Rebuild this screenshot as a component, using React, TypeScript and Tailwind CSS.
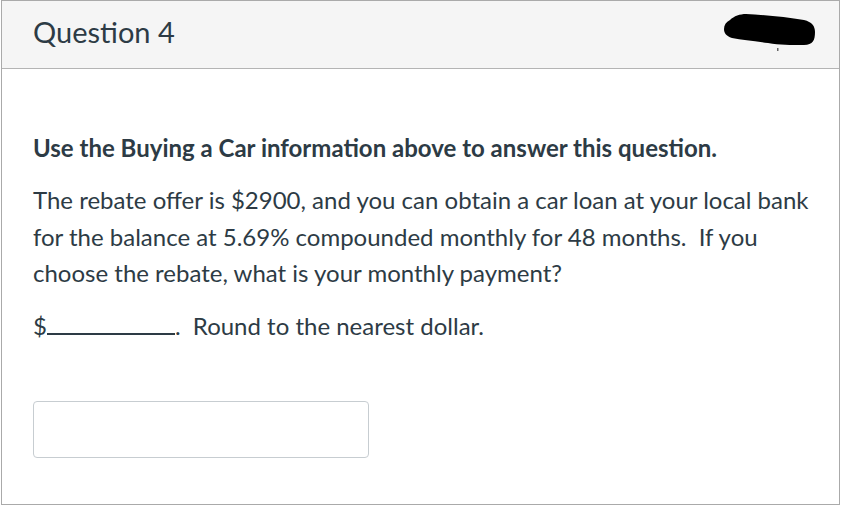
export default function App() {
  return (
    <div className="bg-white w-[847px] h-[511px]" style={{ fontFamily: "Lato, 'Liberation Sans', sans-serif" }}>
      <div className="ml-px w-[839px] h-[505px] border border-[#aaaaaa] text-[#2d3b45]">
        <div className="flex h-[68px] items-center justify-between border-b border-[#b4b4b4] bg-[#f5f5f5] pl-[31px] pr-[23px]">
          <h2 className="mb-[6px] text-[29px] leading-none font-normal">Question 4</h2>
          <svg width="92" height="38" viewBox="0 0 92 38" className="mb-[3px]">
            <path
              d="M6 6 C10 2 16 0 22 0 C40 1 62 3 80 6 C88 8 91 12 91 18 C91 26 89 31 80 31 C66 31 56 31 44 29 C30 27 18 26 8 24 C2 22 0 19 0 15 C0 11 2 8 6 6 Z"
              fill="#000"
            />
            <rect x="53" y="34" width="1.5" height="3" fill="#666" />
          </svg>
        </div>
        <div className="pl-[31px] pr-[24px] pt-[61px] text-[24px]">
          <p className="font-bold leading-[36px]">Use the Buying a Car information above to answer this question.</p>
          <p className="mt-[16px] leading-[36.5px]">
            The rebate offer is $2900, and you can obtain a car loan at your local bank for the balance at 5.69%
            compounded monthly for 48 months.&nbsp; If you choose the rebate, what is your monthly payment?
          </p>
          <p className="mt-[16px] leading-[36px]">
            $<span className="inline-block w-[128px] border-b-2 border-[#2d3b45] align-baseline" />.&nbsp; Round to the nearest dollar.
          </p>
          <div className="mt-[57px] h-[57px] w-[336px] rounded-[4px] border border-[#c7cdd1] bg-white" />
        </div>
      </div>
    </div>
  );
}
